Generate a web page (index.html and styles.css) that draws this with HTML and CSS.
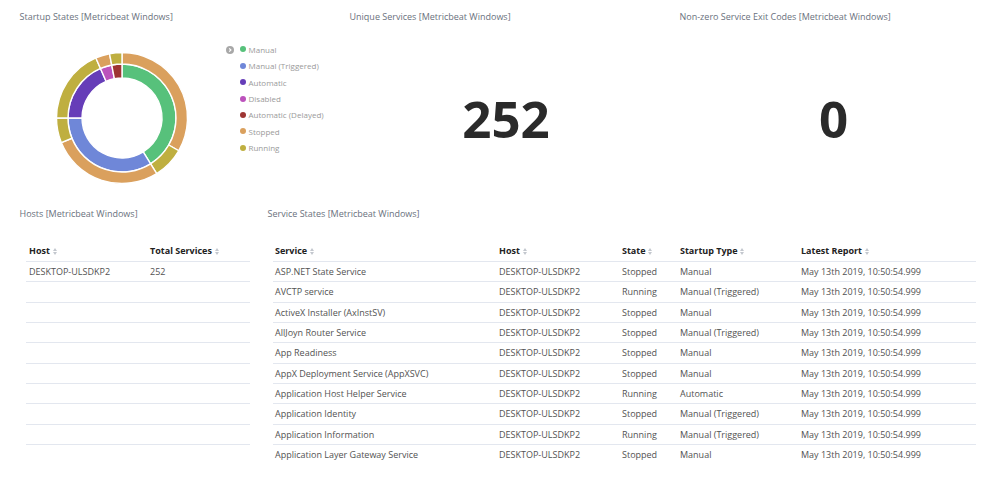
FILE: index.html
```html
<!DOCTYPE html>
<html>
<head>
<meta charset="utf-8">
<link rel="stylesheet" href="styles.css">
</head>
<body>
<div class="dash">
  <div class="top-row">
    <section class="panel">
      <div class="panel-title">Startup States [Metricbeat Windows]</div>
      <div class="pie-row">
        <svg class="donut" width="140" height="140" viewBox="0 0 140 140">
          <g stroke="#fff" stroke-width="1.4" stroke-linejoin="round">
            <path fill="#57c17b" d="M70,16 A54,54 0 0 1 98.61,115.79 L91.20,103.92 A40,40 0 0 0 70,30 Z"/>
            <path fill="#6f87d8" d="M98.61,115.79 A54,54 0 0 1 16,70 L30,70 A40,40 0 0 0 91.20,103.92 Z"/>
            <path fill="#663db8" d="M16,70 A54,54 0 0 1 48.47,20.48 L54.05,33.32 A40,40 0 0 0 30,70 Z"/>
            <path fill="#bc52bc" d="M48.47,20.48 A54,54 0 0 1 59.70,16.99 L62.37,30.74 A40,40 0 0 0 54.05,33.32 Z"/>
            <path fill="#9e3533" d="M59.70,16.99 A54,54 0 0 1 70,16 L70,30 A40,40 0 0 0 62.37,30.74 Z"/>
            <path fill="#daa05d" d="M70,4.5 A65.5,65.5 0 0 1 126.72,102.75 L116.77,97 A54,54 0 0 0 70,16 Z"/>
            <path fill="#bfaf40" d="M126.72,102.75 A65.5,65.5 0 0 1 104.71,125.54 L98.61,115.79 A54,54 0 0 0 116.77,97 Z"/>
            <path fill="#daa05d" d="M104.71,125.54 A65.5,65.5 0 0 1 9.27,94.54 L19.93,90.23 A54,54 0 0 0 98.61,115.79 Z"/>
            <path fill="#bfaf40" d="M9.27,94.54 A65.5,65.5 0 0 1 4.5,70 L16,70 A54,54 0 0 0 19.93,90.23 Z"/>
            <path fill="#bfaf40" d="M4.5,70 A65.5,65.5 0 0 1 43.89,9.93 L48.47,20.48 A54,54 0 0 0 16,70 Z"/>
            <path fill="#daa05d" d="M43.89,9.93 A65.5,65.5 0 0 1 57.50,5.71 L59.70,16.99 A54,54 0 0 0 48.47,20.48 Z"/>
            <path fill="#bfaf40" d="M57.50,5.71 A65.5,65.5 0 0 1 70,4.5 L70,16 A54,54 0 0 0 59.70,16.99 Z"/>
          </g>
        </svg>
        <div class="legend">
          <span class="legend-toggle">
            <svg width="8" height="8" viewBox="0 0 8 8"><circle cx="4" cy="4" r="4" fill="#a8a8a8"/><path d="M3.2 2.3 L4.9 4 L3.2 5.7" fill="none" stroke="#fff" stroke-width="1.2"/></svg>
          </span>
          <ul class="legend-list">
            <li><span class="dot c-manual"></span>Manual</li>
            <li><span class="dot c-trig"></span>Manual (Triggered)</li>
            <li><span class="dot c-auto"></span>Automatic</li>
            <li><span class="dot c-dis"></span>Disabled</li>
            <li><span class="dot c-delay"></span>Automatic (Delayed)</li>
            <li><span class="dot c-stop"></span>Stopped</li>
            <li><span class="dot c-run"></span>Running</li>
          </ul>
        </div>
      </div>
    </section>
    <section class="panel">
      <div class="panel-title">Unique Services [Metricbeat Windows]</div>
      <div class="metric m-mid">252</div>
    </section>
    <section class="panel">
      <div class="panel-title">Non-zero Service Exit Codes [Metricbeat Windows]</div>
      <div class="metric m-right">0</div>
    </section>
  </div>
  <div class="bottom-row">
    <section class="panel">
      <div class="panel-title">Hosts [Metricbeat Windows]</div>
      <table class="tbl hosts">
        <colgroup><col class="hc1"><col></colgroup>
        <thead>
          <tr><th>Host <span class="sort"></span></th><th>Total Services <span class="sort"></span></th></tr>
        </thead>
        <tbody>
          <tr><td>DESKTOP-ULSDKP2</td><td>252</td></tr>
          <tr><td></td><td></td></tr>
          <tr><td></td><td></td></tr>
          <tr><td></td><td></td></tr>
          <tr><td></td><td></td></tr>
          <tr><td></td><td></td></tr>
          <tr><td></td><td></td></tr>
          <tr><td></td><td></td></tr>
          <tr><td></td><td></td></tr>
          <tr><td></td><td></td></tr>
        </tbody>
      </table>
    </section>
    <section class="panel">
      <div class="panel-title">Service States [Metricbeat Windows]</div>
      <table class="tbl services">
        <colgroup><col class="s1"><col class="s2"><col class="s3"><col class="s4"><col></colgroup>
        <thead>
          <tr>
            <th>Service <span class="sort"></span></th>
            <th>Host <span class="sort"></span></th>
            <th>State <span class="sort"></span></th>
            <th>Startup Type <span class="sort"></span></th>
            <th>Latest Report <span class="sort"></span></th>
          </tr>
        </thead>
        <tbody>
          <tr><td>ASP.NET State Service</td><td>DESKTOP-ULSDKP2</td><td>Stopped</td><td>Manual</td><td>May 13th 2019, 10:50:54.999</td></tr>
          <tr><td>AVCTP service</td><td>DESKTOP-ULSDKP2</td><td>Running</td><td>Manual (Triggered)</td><td>May 13th 2019, 10:50:54.999</td></tr>
          <tr><td>ActiveX Installer (AxInstSV)</td><td>DESKTOP-ULSDKP2</td><td>Stopped</td><td>Manual</td><td>May 13th 2019, 10:50:54.999</td></tr>
          <tr><td>AllJoyn Router Service</td><td>DESKTOP-ULSDKP2</td><td>Stopped</td><td>Manual (Triggered)</td><td>May 13th 2019, 10:50:54.999</td></tr>
          <tr><td>App Readiness</td><td>DESKTOP-ULSDKP2</td><td>Stopped</td><td>Manual</td><td>May 13th 2019, 10:50:54.999</td></tr>
          <tr><td>AppX Deployment Service (AppXSVC)</td><td>DESKTOP-ULSDKP2</td><td>Stopped</td><td>Manual</td><td>May 13th 2019, 10:50:54.999</td></tr>
          <tr><td>Application Host Helper Service</td><td>DESKTOP-ULSDKP2</td><td>Running</td><td>Automatic</td><td>May 13th 2019, 10:50:54.999</td></tr>
          <tr><td>Application Identity</td><td>DESKTOP-ULSDKP2</td><td>Stopped</td><td>Manual (Triggered)</td><td>May 13th 2019, 10:50:54.999</td></tr>
          <tr><td>Application Information</td><td>DESKTOP-ULSDKP2</td><td>Running</td><td>Manual (Triggered)</td><td>May 13th 2019, 10:50:54.999</td></tr>
          <tr><td>Application Layer Gateway Service</td><td>DESKTOP-ULSDKP2</td><td>Stopped</td><td>Manual</td><td>May 13th 2019, 10:50:54.999</td></tr>
        </tbody>
      </table>
    </section>
  </div>
</div>
</body>
</html>
```

FILE: styles.css
```css
* { box-sizing: border-box; }
html, body { margin: 0; padding: 0; background: #fff; }
body {
  font-family: "Open Sans", "Noto Sans", sans-serif;
  color: #525252;
  width: 1000px;
  height: 485px;
  overflow: hidden;
}
.dash { padding: 0 10px 0 9px; }
.top-row {
  display: grid;
  grid-template-columns: 330px 330px 321px;
  height: 200px;
}
.panel { min-width: 0; }
.panel-title {
  font-size: 9px;
  line-height: 12px;
  color: #6a717d;
  padding: 11px 10px 0 10.5px;
  white-space: nowrap;
}
.pie-row {
  display: flex;
  align-items: flex-start;
  margin-top: 18px;
  padding-left: 43px;
}
.donut { display: block; margin-top: 6.5px; flex: none; }
.legend {
  display: flex;
  align-items: flex-start;
  margin-left: 34px;
}
.legend-toggle {
  display: block;
  width: 8px;
  height: 8px;
  margin-top: 4.5px;
  margin-right: 6px;
}
.legend-toggle svg { display: block; }
.legend-list {
  list-style: none;
  margin: 0;
  padding: 0;
}
.legend-list li {
  display: flex;
  align-items: center;
  height: 16.45px;
  font-size: 8px;
  color: #9a9a9a;
  white-space: nowrap;
}
.dot {
  display: inline-block;
  width: 6px;
  height: 6px;
  border-radius: 50%;
  margin-right: 2.5px;
}
.c-manual { background: #57c17b; }
.c-trig { background: #6f87d8; }
.c-auto { background: #663db8; }
.c-dis { background: #bc52bc; }
.c-delay { background: #9e3533; }
.c-stop { background: #daa05d; }
.c-run { background: #bfaf40; }

.metric {
  margin-top: 70px;
  text-align: center;
  font-size: 51px;
  line-height: 51px;
  font-weight: 700;
  color: #2a2a2a;
}
.m-mid { padding-left: 4px; }
.m-right { padding-left: 8px; }

.bottom-row {
  display: grid;
  grid-template-columns: 248px 1fr;
}
.bottom-row .panel-title { padding-top: 7.5px; }
.tbl {
  border-collapse: collapse;
  table-layout: fixed;
  margin-top: 21px;
  font-size: 9px;
}
.hosts { width: 224px; margin-left: 17px; }
.services { width: 703px; margin-left: 16px; }
.hc1 { width: 121px; }
.s1 { width: 224px; }
.s2 { width: 123px; }
.s3 { width: 58px; }
.s4 { width: 121px; }
.tbl th {
  text-align: left;
  font-weight: 700;
  color: #222;
  height: 21px;
  padding: 0 2px;
  border-bottom: 1px solid #e3e7ef;
  white-space: nowrap;
}
.tbl td {
  height: 20.33px;
  padding: 0 2px;
  border-bottom: 1px solid #e3e7ef;
  white-space: nowrap;
  overflow: hidden;
}
.hosts th, .hosts td { padding-left: 3px; }
.tbl tbody tr:last-child td { border-bottom: none; }
.sort {
  position: relative;
  display: inline-block;
  width: 5px;
  height: 7px;
  margin-left: 0.5px;
  vertical-align: -0.5px;
}
.sort::before,
.sort::after {
  content: "";
  position: absolute;
  left: 0;
  border-left: 2.5px solid transparent;
  border-right: 2.5px solid transparent;
}
.sort::before { top: 0; border-bottom: 3px solid #c3c7ce; }
.sort::after { top: 4px; border-top: 3px solid #c3c7ce; }
```
